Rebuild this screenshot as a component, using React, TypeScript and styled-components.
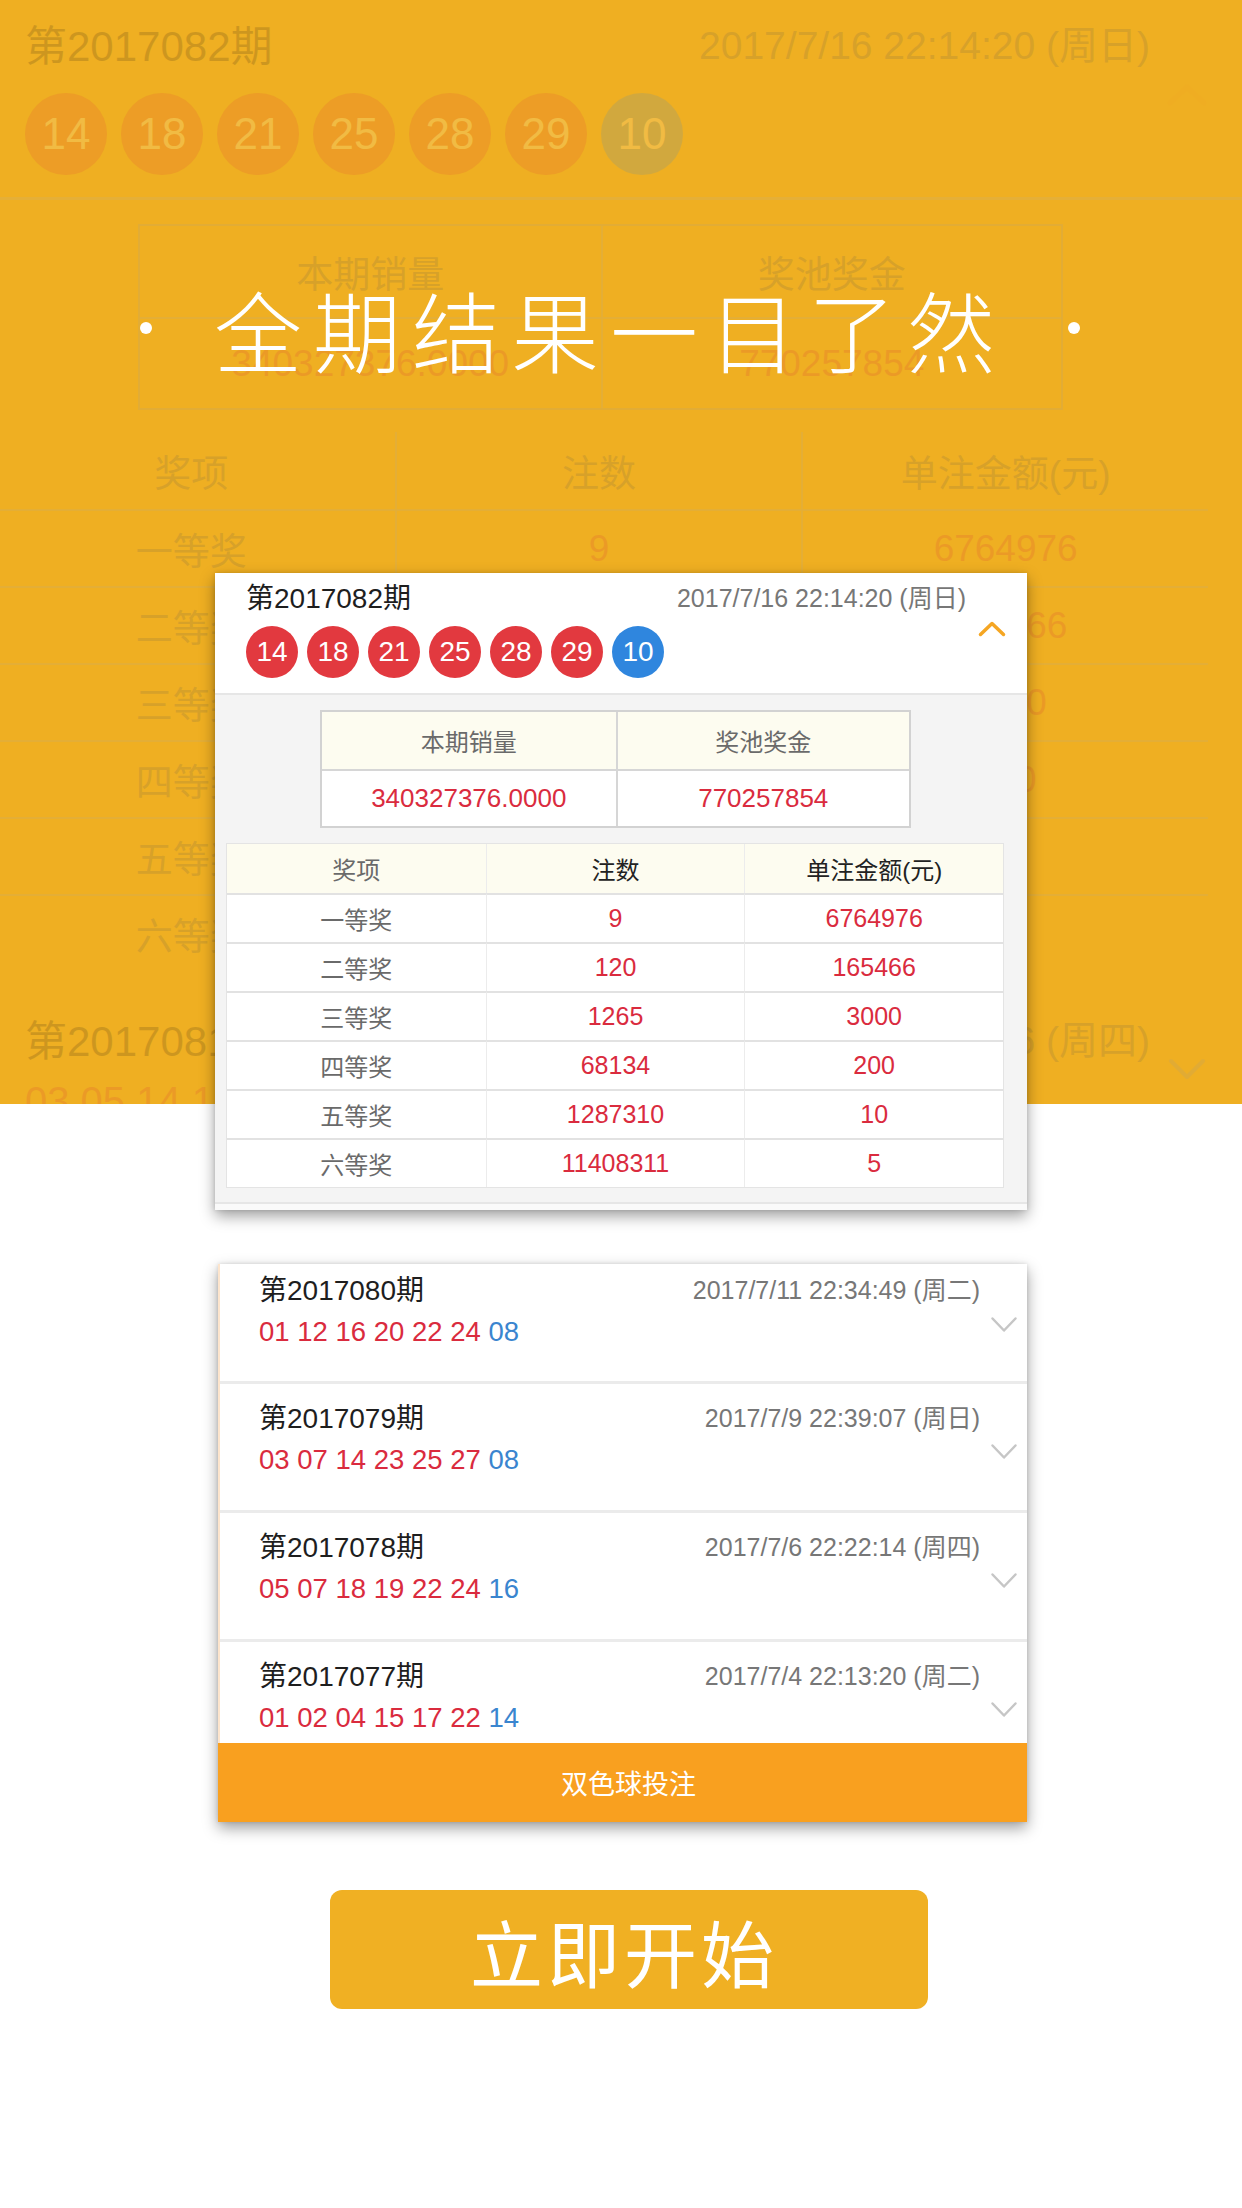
import React from "react";
import styled, { createGlobalStyle } from "styled-components";

const FONT = `"Liberation Sans", "Noto Sans CJK SC", sans-serif`;
const RED = "#DA2B3E";
const BLUE = "#3A85CF";
const BALL_RED = "#E2393F";
const BALL_BLUE = "#2F86DE";
const YELLOW = "#EFAF22";

const GlobalStyle = createGlobalStyle`
  html, body { margin: 0; padding: 0; background: #ffffff; }
  body { font-family: ${FONT}; -webkit-font-smoothing: antialiased; }
  * { box-sizing: border-box; }
`;

/* ---------- page frame ---------- */
const Page = styled.div`
  width: 1242px;
  min-height: 2208px;
  background: #ffffff;
  overflow: hidden;
`;

const Stage = styled.div`
  display: grid;
  grid-template-columns: 1242px;
`;

const Band = styled.section`
  grid-area: 1 / 1;
  align-self: start;
  height: 1104px;
  background: ${YELLOW};
  display: grid;
  grid-template-columns: 1242px;
  overflow: hidden;
`;

const Foreground = styled.main`
  grid-area: 1 / 1;
  position: relative;
  z-index: 2;
  padding-top: 573px;
  display: flex;
  flex-direction: column;
`;

/* ---------- headline ---------- */
const Headline = styled.h1`
  grid-area: 1 / 1;
  align-self: start;
  position: relative;
  z-index: 1;
  margin: 278px 0 0;
  height: 100px;
  padding-right: 22px;
  display: flex;
  align-items: center;
  justify-content: center;
  gap: 62px;
  color: #ffffff;
  font-family: "Noto Sans CJK SC", sans-serif;
  font-weight: 300;
  font-size: 88px;
  letter-spacing: 11px;
  line-height: 100px;
`;

const Dot = styled.span`
  width: 12px;
  height: 12px;
  border-radius: 50%;
  background: #ffffff;
  flex: none;
`;

/* ---------- chevrons ---------- */
type ChevronProps = { dir: "up" | "down"; color: string; w: number; h: number; sw: number };
const Chevron = ({ dir, color, w, h, sw }: ChevronProps) => {
  const p = sw;
  const pts =
    dir === "up"
      ? `${p},${h - p} ${w / 2},${p} ${w - p},${h - p}`
      : `${p},${p} ${w / 2},${h - p} ${w - p},${p}`;
  return (
    <svg width={w} height={h} viewBox={`0 0 ${w} ${h}`}>
      <polyline
        points={pts}
        fill="none"
        stroke={color}
        strokeWidth={sw}
        strokeLinecap="round"
        strokeLinejoin="round"
      />
    </svg>
  );
};

/* ---------- ghost (faded app behind headline) ---------- */
const Ghost = styled.div`
  grid-area: 1 / 1;
  opacity: 0.15;
  width: 1242px;
  height: 1104px;
  overflow: hidden;
  color: #222;
`;

const GhostHeader = styled.div`
  display: grid;
  grid-template-columns: 1fr 92px;
  padding: 14px 0 22px 25px;
  border-bottom: 3px solid #b0b0b0;
`;

const GhostTitleLine = styled.div`
  display: flex;
  justify-content: space-between;
  align-items: center;
  height: 56px;
`;

const GhostTitle = styled.span`
  font-size: 42px;
  color: #111;
`;

const GhostDate = styled.span`
  font-size: 39px;
  color: #555;
`;

const GhostBallRow = styled.div`
  display: flex;
  gap: 14px;
  margin-top: 23px;
`;

const GhostBall = styled.span<{ $blue?: boolean }>`
  width: 82px;
  height: 82px;
  border-radius: 50%;
  background: ${(p) => (p.$blue ? BALL_BLUE : BALL_RED)};
  color: #fff;
  font-size: 44px;
  display: flex;
  align-items: center;
  justify-content: center;
`;

const ChevronCol = styled.div<{ $pad?: number }>`
  display: flex;
  align-items: center;
  justify-content: center;
  padding-right: ${(p) => p.$pad ?? 0}px;
`;

const GhostStats = styled.div`
  margin: 24px 0 0 138px;
  width: 925px;
  border: 2px solid #a0a0a0;
  display: grid;
  grid-template-columns: 1fr 1fr;
  grid-auto-rows: 91px;
  font-size: 37px;
`;

const GhostCell = styled.div<{ $red?: boolean; $left?: boolean; $top?: boolean }>`
  display: flex;
  align-items: center;
  justify-content: center;
  color: ${(p) => (p.$red ? RED : "#555")};
  border-left: ${(p) => (p.$left ? "2px solid #aaa" : "none")};
  border-top: ${(p) => (p.$top ? "2px solid #aaa" : "none")};
`;

const GhostPrize = styled.div`
  margin: 22px 0 0 -12px;
  width: 1220px;
  display: grid;
  grid-template-columns: repeat(3, 1fr);
  grid-auto-rows: 77px;
  font-size: 37px;
`;

const GhostNextRow = styled.div`
  display: grid;
  grid-template-columns: 1fr 92px;
  padding: 38px 0 0 25px;
`;

const GhostNums = styled.div`
  font-size: 40px;
  line-height: 56px;
  margin-top: 8px;
  color: ${RED};
`;

/* ---------- cards ---------- */
const Card = styled.section<{ $width: number; $left: number; $top?: number }>`
  width: ${(p) => p.$width}px;
  margin: ${(p) => p.$top ?? 0}px 0 0 ${(p) => p.$left}px;
  background: #ffffff;
  box-shadow: 0 6px 14px rgba(0, 0, 0, 0.38), 0 0 4px rgba(0, 0, 0, 0.12);
  overflow: hidden;
`;

const IssueHeader = styled.div`
  display: grid;
  grid-template-columns: 1fr 61px;
  padding: 6px 0 15px 31px;
  border-bottom: 2px solid #e6e6e6;
`;

const TitleLine = styled.div<{ $h: number }>`
  display: flex;
  justify-content: space-between;
  align-items: center;
  height: ${(p) => p.$h}px;
`;

const IssueTitle = styled.span`
  font-size: 28px;
  color: #1e1e1e;
`;

const IssueDate = styled.span`
  font-size: 25px;
  color: #777;
`;

const BallRow = styled.div`
  display: flex;
  gap: 9px;
  margin-top: 13px;
`;

const Ball = styled.span<{ $blue?: boolean }>`
  width: 52px;
  height: 52px;
  border-radius: 50%;
  background: ${(p) => (p.$blue ? BALL_BLUE : BALL_RED)};
  color: #fff;
  font-size: 28px;
  display: flex;
  align-items: center;
  justify-content: center;
`;

const DetailBody = styled.div`
  background: #f4f4f4;
  padding-top: 15px;
`;

const StatsTable = styled.div`
  margin-left: 105px;
  width: 591px;
  border: 2px solid #d2d2d2;
  display: grid;
  grid-template-columns: 1fr 1fr;
  grid-auto-rows: 57px;
  font-size: 24px;
`;

const PrizeTable = styled.div`
  margin: 15px 0 0 11px;
  width: 778px;
  border: 1px solid #e4e4e4;
  display: grid;
  grid-template-columns: repeat(3, 1fr);
  grid-auto-rows: 49px;
  font-size: 24px;
`;

type CellTone = "label" | "head" | "red";
const Cell = styled.div<{ $tone: CellTone; $cream?: boolean; $left?: boolean; $top?: boolean; $strong?: boolean; $big?: boolean }>`
  display: flex;
  align-items: center;
  justify-content: center;
  font-size: ${(p) => (p.$big ? 26 : p.$tone === "red" ? 25 : 24)}px;
  background: ${(p) => (p.$cream ? "#fdfcf0" : "#ffffff")};
  color: ${(p) => (p.$tone === "red" ? RED : p.$tone === "head" ? "#222" : "#6a6a6a")};
  border-left: ${(p) => (p.$left ? `${p.$strong ? 2 : 1}px solid ${p.$strong ? "#d6d6d6" : "#ececec"}` : "none")};
  border-top: ${(p) => (p.$top ? `2px solid ${p.$strong ? "#d6d6d6" : "#e2e2e2"}` : "none")};
`;

const BodyFooter = styled.div`
  height: 22px;
  display: flex;
  flex-direction: column;
  justify-content: flex-end;
`;

const FooterStrip = styled.div`
  height: 8px;
  border-top: 2px solid #e6e6e6;
  background: #fafafa;
`;

const ListViewport = styled.div`
  height: 479px;
  overflow: hidden;
  border-left: 2px solid #fde5cd;
`;

const ListRow = styled.div<{ $first?: boolean }>`
  display: grid;
  grid-template-columns: 1fr 47px;
  height: ${(p) => (p.$first ? 120 : 129)}px;
  padding: ${(p) => (p.$first ? 8 : 16)}px 0 0 39px;
  border-bottom: 3px solid #ebebeb;
`;

const RowChevron = styled.div<{ $shift: number }>`
  display: flex;
  align-items: center;
  justify-content: center;
  margin-top: ${(p) => -p.$shift}px;
`;

const NumLine = styled.div`
  margin-top: 10px;
  font-size: 27.5px;
  line-height: 36px;
  color: ${RED};
  white-space: pre;
`;

const BlueNum = styled.span`
  color: ${BLUE};
`;

const BetBar = styled.div`
  height: 79px;
  background: #f9a01f;
  color: #ffffff;
  font-size: 27px;
  display: flex;
  align-items: center;
  justify-content: center;
  padding-left: 12px;
`;

const StartButton = styled.button`
  margin: 68px 0 0 330px;
  width: 598px;
  height: 119px;
  border: none;
  border-radius: 12px;
  background: #f0b023;
  color: #ffffff;
  font-family: "Noto Sans CJK SC", sans-serif;
  font-size: 73px;
  letter-spacing: 4px;
  padding: 0 10px 0 0;
  cursor: pointer;
`;

/* ---------- data ---------- */
const reds = ["14", "18", "21", "25", "28", "29"];
const blue = "10";

const prizes = [
  ["一等奖", "9", "6764976"],
  ["二等奖", "120", "165466"],
  ["三等奖", "1265", "3000"],
  ["四等奖", "68134", "200"],
  ["五等奖", "1287310", "10"],
  ["六等奖", "11408311", "5"],
];

const history = [
  { issue: "第2017080期", date: "2017/7/11 22:34:49 (周二)", red: "01 12 16 20 22 24 ", blue: "08" },
  { issue: "第2017079期", date: "2017/7/9 22:39:07 (周日)", red: "03 07 14 23 25 27 ", blue: "08" },
  { issue: "第2017078期", date: "2017/7/6 22:22:14 (周四)", red: "05 07 18 19 22 24 ", blue: "16" },
  { issue: "第2017077期", date: "2017/7/4 22:13:20 (周二)", red: "01 02 04 15 17 22 ", blue: "14" },
];

/* ---------- sections ---------- */
const GhostApp = () => (
  <Ghost aria-hidden>
    <GhostHeader>
      <div>
        <GhostTitleLine>
          <GhostTitle>第2017082期</GhostTitle>
          <GhostDate>2017/7/16 22:14:20 (周日)</GhostDate>
        </GhostTitleLine>
        <GhostBallRow>
          {reds.map((n) => (
            <GhostBall key={n}>{n}</GhostBall>
          ))}
          <GhostBall $blue>{blue}</GhostBall>
        </GhostBallRow>
      </div>
      <ChevronCol $pad={18}>
        <Chevron dir="up" color="#F5A623" w={44} h={26} sw={5} />
      </ChevronCol>
    </GhostHeader>
    <GhostStats>
      <GhostCell>本期销量</GhostCell>
      <GhostCell $left>奖池奖金</GhostCell>
      <GhostCell $red $top>340327376.0000</GhostCell>
      <GhostCell $red $top $left>770257854</GhostCell>
    </GhostStats>
    <GhostPrize>
      <GhostCell>奖项</GhostCell>
      <GhostCell $left>注数</GhostCell>
      <GhostCell $left>单注金额(元)</GhostCell>
      {prizes.map(([a, b, c]) => (
        <React.Fragment key={a}>
          <GhostCell $top>{a}</GhostCell>
          <GhostCell $top $left $red>{b}</GhostCell>
          <GhostCell $top $left $red>{c}</GhostCell>
        </React.Fragment>
      ))}
    </GhostPrize>
    <GhostNextRow>
      <div>
        <GhostTitleLine>
          <GhostTitle>第2017081期</GhostTitle>
          <GhostDate>2017/7/13 22:13:26 (周四)</GhostDate>
        </GhostTitleLine>
        <GhostNums>03 05 14 17 23 26 15</GhostNums>
      </div>
      <ChevronCol $pad={18}>
        <Chevron dir="down" color="#999" w={40} h={24} sw={4} />
      </ChevronCol>
    </GhostNextRow>
  </Ghost>
);

const DetailCard = () => (
  <Card $width={812} $left={215}>
    <IssueHeader>
      <div>
        <TitleLine $h={34}>
          <IssueTitle>第2017082期</IssueTitle>
          <IssueDate>2017/7/16 22:14:20 (周日)</IssueDate>
        </TitleLine>
        <BallRow>
          {reds.map((n) => (
            <Ball key={n}>{n}</Ball>
          ))}
          <Ball $blue>{blue}</Ball>
        </BallRow>
      </div>
      <ChevronCol $pad={10}>
        <Chevron dir="up" color="#F5A623" w={30} h={18} sw={3.5} />
      </ChevronCol>
    </IssueHeader>
    <DetailBody>
      <StatsTable>
        <Cell $tone="label" $cream>本期销量</Cell>
        <Cell $tone="label" $cream $left $strong>奖池奖金</Cell>
        <Cell $tone="red" $top $strong $big>340327376.0000</Cell>
        <Cell $tone="red" $top $left $strong $big>770257854</Cell>
      </StatsTable>
      <PrizeTable>
        <Cell $tone="label" $cream>奖项</Cell>
        <Cell $tone="head" $cream $left>注数</Cell>
        <Cell $tone="head" $cream $left>单注金额(元)</Cell>
        {prizes.map(([a, b, c]) => (
          <React.Fragment key={a}>
            <Cell $tone="label" $top>{a}</Cell>
            <Cell $tone="red" $top $left>{b}</Cell>
            <Cell $tone="red" $top $left>{c}</Cell>
          </React.Fragment>
        ))}
      </PrizeTable>
      <BodyFooter>
        <FooterStrip />
      </BodyFooter>
    </DetailBody>
  </Card>
);

const HistoryCard = () => (
  <Card $width={809} $left={218} $top={54}>
    <ListViewport>
      {history.map((h, i) => (
        <ListRow key={h.issue} $first={i === 0}>
          <div>
            <TitleLine $h={32}>
              <IssueTitle>{h.issue}</IssueTitle>
              <IssueDate>{h.date}</IssueDate>
            </TitleLine>
            <NumLine>
              {h.red}
              <BlueNum>{h.blue}</BlueNum>
            </NumLine>
          </div>
          <RowChevron $shift={i === 0 ? 4 : 8}>
            <Chevron dir="down" color="#C6C6C6" w={28} h={17} sw={2.5} />
          </RowChevron>
        </ListRow>
      ))}
    </ListViewport>
    <BetBar>双色球投注</BetBar>
  </Card>
);

export default function App() {
  return (
    <Page>
      <GlobalStyle />
      <Stage>
        <Band>
          <GhostApp />
          <Headline>
            <Dot />
            <span>全期结果一目了然</span>
            <Dot />
          </Headline>
        </Band>
        <Foreground>
          <DetailCard />
          <HistoryCard />
          <StartButton>立即开始</StartButton>
        </Foreground>
      </Stage>
    </Page>
  );
}
